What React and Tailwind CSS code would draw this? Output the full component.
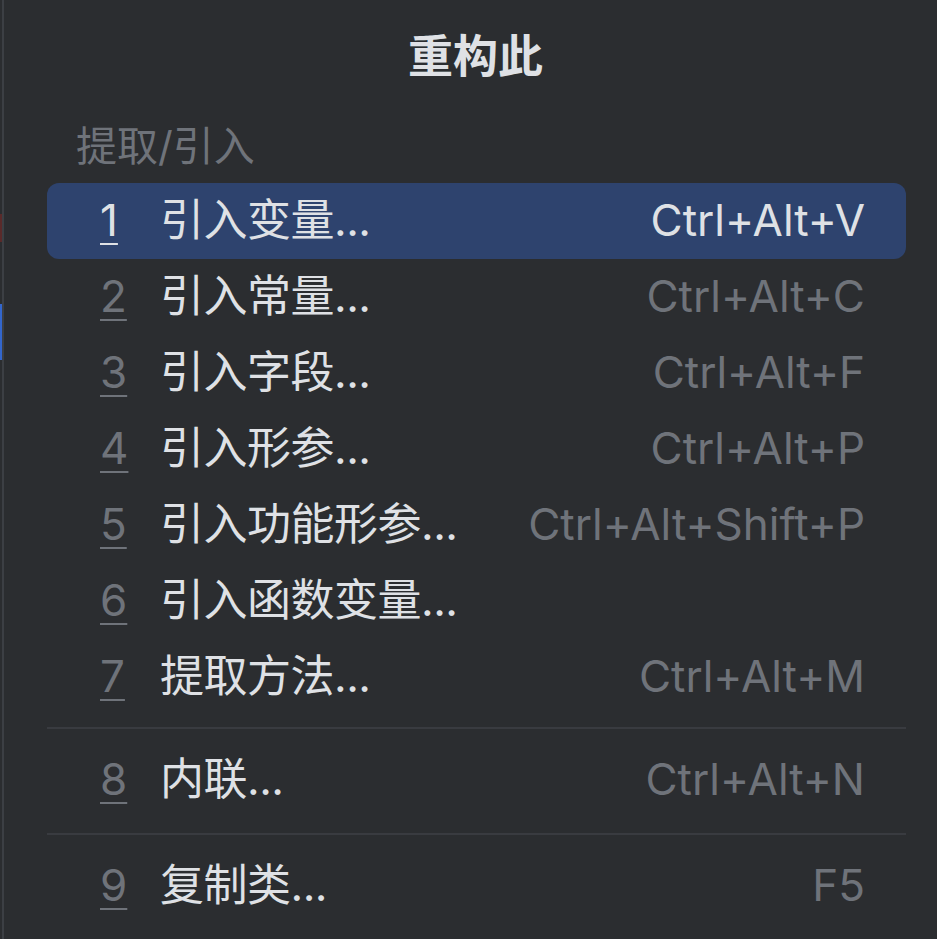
const groups = [
  [
    { n: "1", label: "引入变量...", keys: "Ctrl+Alt+V", active: true },
    { n: "2", label: "引入常量...", keys: "Ctrl+Alt+C" },
    { n: "3", label: "引入字段...", keys: "Ctrl+Alt+F" },
    { n: "4", label: "引入形参...", keys: "Ctrl+Alt+P" },
    { n: "5", label: "引入功能形参...", keys: "Ctrl+Alt+Shift+P" },
    { n: "6", label: "引入函数变量...", keys: "" },
    { n: "7", label: "提取方法...", keys: "Ctrl+Alt+M" },
  ],
  [{ n: "8", label: "内联...", keys: "Ctrl+Alt+N" }],
  [{ n: "9", label: "复制类...", keys: "F5" }],
];

const MenuRow = ({ item }) => (
  <div
    className={`flex items-center h-[76px] pl-[53px] pr-[41px] pb-[3px] rounded-[12px] leading-none ${
      item.active ? "bg-[#2e436e]" : ""
    }`}
  >
    <span
      className={`w-[60px] underline underline-offset-[7px] decoration-[2px] ${
        item.active ? "text-[#dfe1e5]" : "text-[#6f737a]"
      }`}
    >
      {item.n}
    </span>
    <span className="flex-1 text-[#dfe1e5] whitespace-nowrap tracking-[-0.5px]">{item.label}</span>
    <span className={`whitespace-nowrap ${item.active ? "text-[#dfe1e5]" : "text-[#6f737a]"}`}>
      {item.keys}
    </span>
  </div>
);

export default function App() {
  return (
    <div
      className="w-[937px] h-[939px] bg-[#2b2d30] flex overflow-hidden"
      style={{ fontFamily: "Inter, 'Noto Sans CJK SC', sans-serif" }}
    >
      {/* left edge of editor behind popup */}
      <div className="w-[2px] flex flex-col bg-[#2b2d30]">
        <div className="h-[214px]" />
        <div className="h-[28px] bg-[#5a2a2a]" />
        <div className="h-[62px]" />
        <div className="h-[56px] bg-[#3366cc]" />
      </div>
      <div className="w-[2px] bg-[#3c3f44]" />

      <div className="flex-1 flex flex-col pl-[43px] pr-[31px]">
        <div className="h-[114px] flex items-center justify-center pr-[2px] text-[45px] font-bold text-[#dfe1e5]">
          重构此
        </div>
        <div className="h-[69px] flex items-center pl-[29px] pb-[4px] text-[41px] text-[#6f737a]">
          提取/引入
        </div>
        <div className="text-[44px]">
          {groups[0].map((item) => (
            <MenuRow key={item.n} item={item} />
          ))}
          <div className="h-[2px] bg-[#393b40] mt-[12px] mb-[13px]" />
          {groups[1].map((item) => (
            <MenuRow key={item.n} item={item} />
          ))}
          <div className="h-[2px] bg-[#393b40] mt-[15px] mb-[13px]" />
          {groups[2].map((item) => (
            <MenuRow key={item.n} item={item} />
          ))}
        </div>
      </div>
    </div>
  );
}
